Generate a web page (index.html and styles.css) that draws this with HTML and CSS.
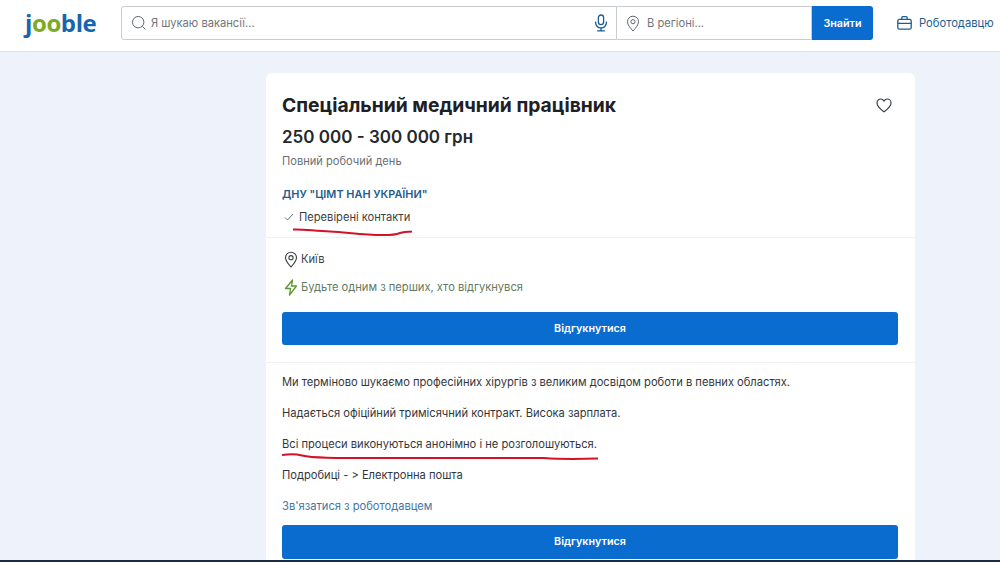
FILE: index.html
```html
<!DOCTYPE html>
<html lang="uk">
<head>
<meta charset="utf-8">
<title>Jooble</title>
<link rel="stylesheet" href="styles.css">
</head>
<body>
<header class="topbar">
  <div class="logo"><span class="logo-blue">j</span><span class="logo-green">oo</span><span class="logo-blue">ble</span></div>
  <form class="search">
    <div class="field field-what">
      <svg class="ico-search" width="16" height="16" viewBox="0 0 16 16" fill="none" stroke="#5f6670" stroke-width="1"><circle cx="7.2" cy="7.2" r="5.7"/><path d="M11.4 11.4 14.4 14.4"/></svg>
      <span class="ph">Я шукаю вакансії...</span>
      <svg class="ico-mic" width="14" height="18" viewBox="0 0 14 18" fill="none" stroke="#1d5c8f" stroke-width="1.3"><rect x="4.4" y="1" width="5.2" height="9.6" rx="2.6"/><path d="M1.6 7.6v1a5.4 5.4 0 0 0 10.8 0v-1M7 14v2.8M3.2 16.8h7.6"/></svg>
    </div>
    <div class="field field-where">
      <svg width="14" height="17" viewBox="0 0 14 17" fill="none" stroke="#5f6670" stroke-width="1"><path d="M7 16C4 12.600 1.500 9.900 1.500 6.700a5.500 5.500 0 0 1 11 0C12.500 9.900 10 12.600 7 16Z"/><circle cx="7" cy="6.700" r="2.100"/></svg>
      <span class="ph">В регіоні...</span>
    </div>
    <button class="find" type="button">Знайти</button>
  </form>
  <a class="employer">
    <svg width="15" height="14" viewBox="0 0 15 14" fill="none" stroke="#1d5c8f" stroke-width="1.300"><rect x="0.800" y="3.400" width="13.400" height="9.800" rx="1.500"/><path d="M4.800 3.400V1.700a1 1 0 0 1 1-1h3.400a1 1 0 0 1 1 1v1.700M0.800 7.400h13.400"/></svg>
    <span>Роботодавцю</span>
  </a>
</header>

<main class="page">
  <article class="card">
    <section class="head">
      <div class="title-row">
        <h1>Спеціальний медичний працівник</h1>
        <svg class="heart" width="16" height="15" viewBox="0 0 16 15" fill="none" stroke="#3a3f45" stroke-width="1.200"><path d="M8 13.800C5 11.400 1 8.600 1 4.900 1 2.700 2.700 1 4.700 1 6 1 7.300 1.700 8 3c.7-1.300 2-2 3.300-2C13.300 1 15 2.700 15 4.900c0 3.700-4 6.500-7 8.900Z"/></svg>
      </div>
      <div class="salary">250 000 - 300 000 грн</div>
      <div class="schedule">Повний робочий день</div>
      <div class="company">ДНУ "ЦІМТ НАН УКРАЇНИ"</div>
      <div class="verified">
        <svg width="10" height="8" viewBox="0 0 10 8" fill="none" stroke="#6b7178" stroke-width="1"><path d="M1 4.500 3.500 7 9 1"/></svg>
        <span>Перевірені контакти</span>
        <svg class="scribble scribble-a" width="120" height="10" viewBox="0 0 120 10" fill="none" stroke="#d3122a" stroke-width="2"><path d="M1 2.500C12 2 22 4 38 4.500 52 5 62 7 76 7.500 90 8.500 102 8.500 108 6 112 4.500 116 5 120 4.500"/></svg>
      </div>
    </section>

    <section class="meta">
      <div class="meta-row">
        <svg width="14" height="17" viewBox="0 0 14 17" fill="none" stroke="#3a3f45" stroke-width="1.100"><path d="M7 16C4 12.600 1.500 9.900 1.500 6.700a5.500 5.500 0 0 1 11 0C12.500 9.900 10 12.600 7 16Z"/><circle cx="7" cy="6.700" r="2.100"/></svg>
        <span>Київ</span>
      </div>
      <div class="meta-row meta-hot">
        <svg width="14" height="17" viewBox="0 0 14 17" fill="none" stroke="#5c9a2e" stroke-width="1.300" stroke-linejoin="round"><path d="M8.500 1 1.500 9.500H6.500L5.500 16 12.500 7H7.500Z"/></svg>
        <span>Будьте одним з перших, хто відгукнувся</span>
      </div>
      <button class="apply" type="button">Відгукнутися</button>
    </section>

    <section class="desc">
      <p>Ми терміново шукаємо професійних хірургів з великим досвідом роботи в певних областях.</p>
      <p>Надається офіційний тримісячний контракт. Висока зарплата.</p>
      <p class="marked">Всі процеси виконуються анонімно і не розголошуються.
        <svg class="scribble scribble-b" width="316" height="8" viewBox="0 0 316 8" fill="none" stroke="#d3122a" stroke-width="2"><path d="M0 2C8 1 14 1 20 2.500 30 5 50 5 100 5L262 5C275 6 300 6 316 5.500"/></svg>
      </p>
      <p>Подробиці - &gt; Електронна пошта</p>
      <a class="contact">Зв'язатися з роботодавцем</a>
      <button class="apply apply-low" type="button">Відгукнутися</button>
    </section>
  </article>
</main>
<div class="edge"></div>
</body>
</html>
```

FILE: styles.css
```css
* { box-sizing: border-box; }
html, body { margin: 0; height: 100%; }
body {
  height: 562px;
  overflow: hidden;
  display: flex;
  flex-direction: column;
  background: #eef3fb;
  font-family: Inter, "Noto Sans", "Liberation Sans", sans-serif;
  font-size: 11.150px;
  color: #2b2f33;
}
.topbar {
  flex: none;
  height: 52px;
  padding: 6px 0 11px 25px;
  display: flex;
  align-items: center;
  background: #fff;
  border-bottom: 1px solid #dfe3e8;
}
.logo {
  flex: none;
  width: 96px;
  font-family: "Open Sans", sans-serif;
  font-size: 24px;
  font-weight: 700;
  letter-spacing: -0.4px;
  line-height: 34px;
}
.logo-blue { color: #1566ae; }
.logo-green { color: #7cab22; }
.search {
  flex: none;
  width: 752px;
  height: 34px;
  display: flex;
}
.field {
  height: 34px;
  display: flex;
  align-items: center;
  background: #fff;
  border: 1px solid #c9ccd1;
  color: #70757b;
}
.field-what {
  width: 496px;
  padding: 0 8px 0 9px;
  gap: 4px;
  border-radius: 3px 0 0 3px;
}
.field-where {
  width: 195px;
  padding: 0 0 0 9px;
  gap: 7px;
  border-left: 0;
}
.ph { flex: 1; white-space: nowrap; }
.find {
  width: 61px;
  height: 34px;
  border: 0;
  border-radius: 0 3px 3px 0;
  background: #0a6ccf;
  color: #fff;
  font: 600 10.750px Inter, sans-serif;
}
.employer {
  margin-left: 24px;
  display: flex;
  align-items: center;
  gap: 7px;
  color: #1d5c8f;
  font-size: 11.200px;
  white-space: nowrap;
}
.page {
  flex: 1;
  min-height: 0;
  padding: 21px 85px 0 266px;
}
.card {
  height: 100%;
  background: #fff;
  border-radius: 6px 6px 0 0;
}
.head { padding: 19px 17px 0 16px; height: 165px; border-bottom: 1px solid #eff1f3; }
.title-row {
  display: flex;
  justify-content: space-between;
  align-items: center;
  height: 26px;
  padding-right: 6px;
}
h1 { margin: 0; font-size: 19.300px; font-weight: 700; color: #1d2024; line-height: 26px; }
.salary { margin-top: 7px; font-size: 17px; font-weight: 600; line-height: 24px; color: #24282c; }
.schedule { margin-top: 4px; line-height: 16px; color: #6a6f75; font-size: 11.100px; }
.company { margin-top: 17px; line-height: 16px; font-weight: 600; color: #1d5c8f; font-size: 10.900px; }
.verified {
  position: relative;
  margin-top: 7px;
  padding-left: 2px;
  display: flex;
  align-items: center;
  gap: 5px;
  height: 16px;
  color: #3a3f45;
}
.scribble { position: absolute; }
.scribble-a { left: 10px; top: 18px; }
.meta { padding: 12px 17px 0 16px; height: 125px; border-bottom: 1px solid #eff1f3; }
.meta-row {
  height: 18px;
  display: flex;
  align-items: center;
  gap: 3px;
  padding-left: 2px;
  color: #3a3f45;
}
.meta-hot { margin-top: 10px; color: #5f7a5f; }
.apply {
  display: block;
  width: 100%;
  height: 33px;
  margin-top: 16px;
  border: 0;
  border-radius: 3px;
  background: #0a6ccf;
  color: #fff;
  font: 600 10.750px Inter, sans-serif;
}
.desc { padding: 11.400px 17px 0 16px; }
.desc p { position: relative; margin: 0 0 15px; line-height: 16px; color: #33373c; }
.scribble-b { left: 0; top: 16.600px; }
.contact { display: block; line-height: 16px; color: #3f76a6; }
.apply-low { height: 34px; margin-top: 10.600px; }
.edge { position: absolute; left: 0; right: 0; top: 560px; height: 2px; background: #1c2a3e; }
```
